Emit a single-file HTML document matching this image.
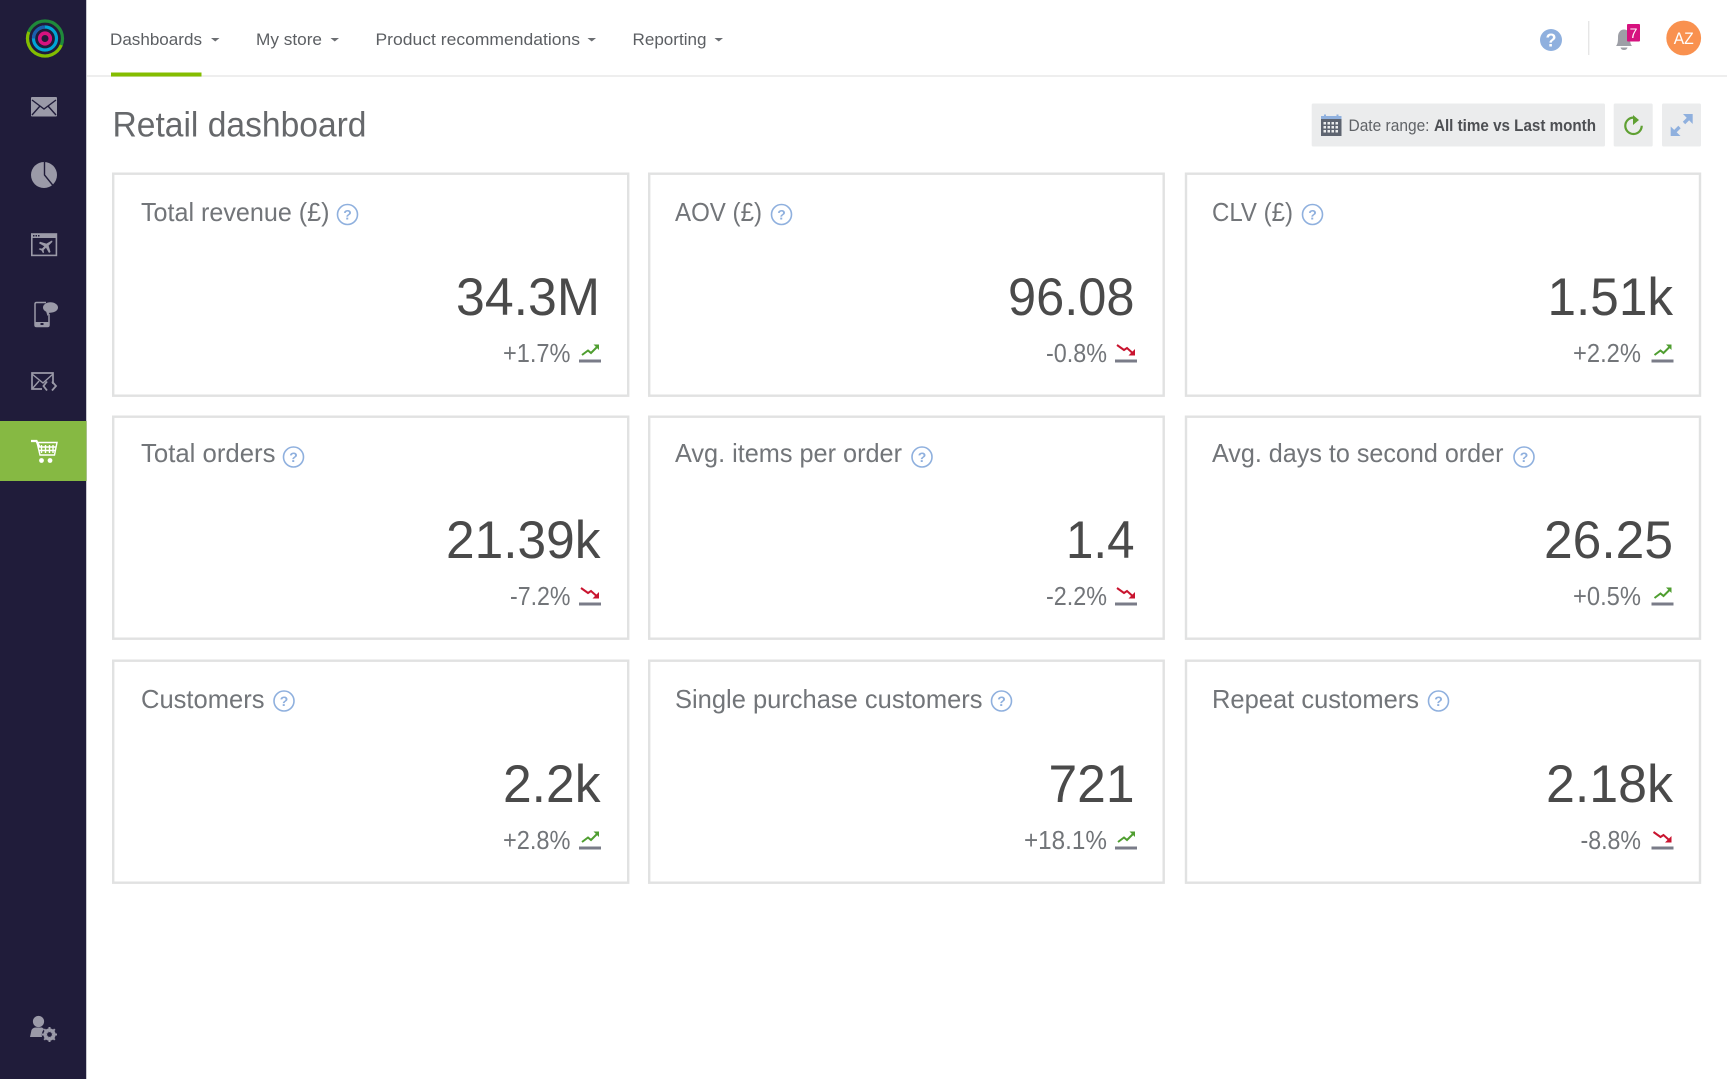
<!DOCTYPE html>
<html lang="en">
<head>
<meta charset="utf-8">
<title>Retail dashboard</title>
<style>
html,body{margin:0;padding:0;background:#fff;width:1727px;height:1079px;overflow:hidden}
svg{display:block;position:absolute;left:0;top:0}
text{font-family:"Liberation Sans",sans-serif}
.nav{font-size:16.5px;fill:#5c5f63}
.t{font-size:26px;fill:#727579}
.v{font-size:53px;fill:#4a4a4a}
.d{font-size:26px;fill:#727579}
.q{font-size:14px;font-weight:bold;fill:#8fb0de;text-anchor:middle}
.card{fill:#fff;stroke:#e1e2e2;stroke-width:2.4}
</style>
</head>
<body>
<svg width="1727" height="1079" viewBox="0 0 1727 1079" xmlns="http://www.w3.org/2000/svg">
<defs>
<g id="up">
<rect x="-22" y="-1.5" width="22" height="3" fill="#7a7c88"/>
<path d="M-19 -6 L-13 -10.5 L-10 -8 L-4 -14" fill="none" stroke="#4f9e30" stroke-width="2"/>
<path d="M-7.5 -16.5 L-2 -16.5 L-2 -11 Z" fill="#4f9e30"/>
</g>
<g id="down">
<rect x="-22" y="-1.5" width="22" height="3" fill="#7a7c88"/>
<path d="M-20 -16 L-13 -11 L-10 -13 L-5 -8.5" fill="none" stroke="#c9142f" stroke-width="2"/>
<path d="M-8.5 -5.5 L-2 -5.5 L-2 -12 Z" fill="#c9142f"/>
</g>
<g id="h">
<circle cx="0" cy="0" r="10" fill="#fff" stroke="#8fb0de" stroke-width="1.6"/>
<text class="q" x="0" y="5">?</text>
</g>
</defs>

<!-- sidebar -->
<rect x="0" y="0" width="86" height="1079" fill="#201c3a"/>
<rect x="86" y="0" width="1" height="1079" fill="#c9c9d0"/>
<rect x="0" y="421" width="86.5" height="60" fill="#86b943"/>

<!-- logo -->
<circle cx="45" cy="38.5" r="17.5" fill="none" stroke="#1f8a3a" stroke-width="3.2"/>
<path d="M27.5 38.5 A17.5 17.5 0 0 0 62.5 38.5" fill="none" stroke="#84bd00" stroke-width="3.2" transform="rotate(22 45 38.5)"/>
<circle cx="45" cy="38.5" r="11.5" fill="none" stroke="#00a5d6" stroke-width="3.2"/>
<path d="M33.5 38.5 A11.5 11.5 0 0 1 45 27" fill="none" stroke="#1b5fae" stroke-width="3.2"/>
<circle cx="45" cy="38.5" r="5.3" fill="none" stroke="#d6127f" stroke-width="3.6"/>

<!-- mail -->
<rect x="31" y="97" width="26" height="19.5" rx="1" fill="#9b9aa8"/>
<path d="M32 100 L44 109 L56 100 M32 115 L40 106 M56 115 L48 106" fill="none" stroke="#201c3a" stroke-width="1.4"/>
<!-- pie -->
<circle cx="44" cy="175" r="13" fill="#9b9aa8"/>
<path d="M44.5 162 L44.5 175 L53 185.5" fill="none" stroke="#201c3a" stroke-width="1.4"/>
<!-- browser plane -->
<rect x="31.8" y="234" width="24.6" height="21.4" fill="none" stroke="#9b9aa8" stroke-width="1.6"/>
<rect x="31" y="233.5" width="26" height="4.5" fill="#9b9aa8"/>
<path d="M33 235 h1.5 v1.5 h-1.5z M35.5 235 h1.5 v1.5 h-1.5z M38 235 h1.5 v1.5 h-1.5z" fill="#201c3a"/>
<path d="M51 241 C52 240 53 241 52 242.3 L48.6 245.6 L50.5 252 L49 253 L46 247.8 L43.6 250 L44 252.5 L43 253.2 L41.6 250.6 L38.8 249.2 L39.6 248.2 L42 248.6 L44.3 246.2 L39 243.2 L40 241.8 L46.4 243.6 Z" fill="#9b9aa8"/>
<!-- phone bubble -->
<path d="M46 302.5 H36.5 Q35 302.5 35 304 V325 Q35 326.5 36.5 326.5 H47.5 Q49 326.5 49 325 V314" fill="none" stroke="#9b9aa8" stroke-width="1.5"/>
<rect x="35" y="322" width="14" height="4.5" rx="1" fill="#9b9aa8"/>
<rect x="40.5" y="323" width="3" height="2" fill="#201c3a"/>
<ellipse cx="50.5" cy="307.5" rx="7.5" ry="5.2" fill="#9b9aa8"/>
<path d="M46 311 L47.5 316 L50 312 Z" fill="#9b9aa8"/>
<!-- mail code -->
<path d="M53 384 V373 H32 V389 H42" fill="none" stroke="#9b9aa8" stroke-width="1.7"/>
<path d="M32 374 L43 383 L53 374 M32 389 L39 381" fill="none" stroke="#9b9aa8" stroke-width="1.4"/>
<path d="M47 381.5 L43.5 386 L47 390.5 M52 381.5 L56 386 L52 390.5" fill="none" stroke="#9b9aa8" stroke-width="1.8"/>
<!-- cart -->
<path d="M31 441 H36.5 L39.5 447" fill="none" stroke="#fff" stroke-width="2.2"/>
<path d="M37 442.5 H57 L54.5 455 H40 Z M41.5 445 V453 M45.5 445 V453 M49.5 445 V453 M53 445 V453 M38.5 447 H55.5 M39 450.5 H55" fill="none" stroke="#fff" stroke-width="1.4"/>
<circle cx="41.5" cy="460.5" r="2.4" fill="#fff"/>
<circle cx="50" cy="460.5" r="2.4" fill="#fff"/>
<!-- user gear -->
<circle cx="38.5" cy="1021.5" r="5.6" fill="#9b9aa8"/>
<path d="M30 1037 L31.5 1030 Q33 1027.5 36 1027.5 H42 L44 1029 Q41 1033 42 1037 Z" fill="#9b9aa8"/>
<circle cx="49.5" cy="1034.5" r="4.6" fill="none" stroke="#9b9aa8" stroke-width="3"/>
<path d="M49.5 1027 V1042 M42 1034.5 H57 M44.2 1029.2 L54.8 1039.8 M54.8 1029.2 L44.2 1039.8" stroke="#9b9aa8" stroke-width="2"/>
<circle cx="49.5" cy="1034.5" r="2.4" fill="#201c3a"/>

<!-- header -->
<rect x="87" y="75" width="1640" height="2" fill="#eeeeee"/>
<rect x="111" y="72.5" width="90.5" height="4" fill="#84bd00"/>
<text class="nav" x="110" y="45" textLength="92" lengthAdjust="spacingAndGlyphs">Dashboards</text>
<path d="M211 38 H219.5 L215.25 41.5 Z" fill="#6b6e72"/>
<text class="nav" x="256" y="45" textLength="66" lengthAdjust="spacingAndGlyphs">My store</text>
<path d="M330.5 38 H339 L334.75 41.5 Z" fill="#6b6e72"/>
<text class="nav" x="375.5" y="45" textLength="204.5" lengthAdjust="spacingAndGlyphs">Product recommendations</text>
<path d="M587.5 38 H596 L591.75 41.5 Z" fill="#6b6e72"/>
<text class="nav" x="632.5" y="45" textLength="74" lengthAdjust="spacingAndGlyphs">Reporting</text>
<path d="M714.5 38 H723 L718.75 41.5 Z" fill="#6b6e72"/>

<!-- header right -->
<circle cx="1551" cy="40" r="11" fill="#8fb0de"/>
<text x="1551" y="46.5" font-size="18" font-weight="bold" fill="#fff" text-anchor="middle">?</text>
<rect x="1588" y="21" width="1.4" height="34" fill="#e6e6e6"/>
<path d="M1616 46 C1618 44 1618 40 1618 37 C1618 32.5 1620.5 29.5 1624 29.5 C1627.5 29.5 1630 32.5 1630 37 C1630 40 1630 44 1632 46 Z" fill="#9d9fa6"/>
<path d="M1620.5 47.5 H1627.5 Q1627 50 1624 50 Q1621 50 1620.5 47.5 Z" fill="#9d9fa6"/>
<rect x="1627" y="24" width="13" height="17.5" rx="1" fill="#d6127f"/>
<text x="1633.5" y="38" font-size="14" fill="#fff" text-anchor="middle">7</text>
<circle cx="1683.7" cy="38" r="17.4" fill="#f9914f"/>
<text x="1683.7" y="44" font-size="16.5" fill="#fff" text-anchor="middle" textLength="20" lengthAdjust="spacingAndGlyphs">AZ</text>

<!-- title -->
<text x="112.5" y="136.5" font-size="35" fill="#66686b" textLength="254" lengthAdjust="spacingAndGlyphs">Retail dashboard</text>

<!-- toolbar -->
<rect x="1311.7" y="103.5" width="293.3" height="43" rx="1.5" fill="#ebeced"/>
<rect x="1613.7" y="103.5" width="39" height="43" rx="1.5" fill="#ebeced"/>
<rect x="1662" y="103.5" width="39" height="43" rx="1.5" fill="#ebeced"/>
<!-- calendar -->
<rect x="1321" y="116.5" width="20.5" height="19.5" fill="#5e6470"/>
<rect x="1321" y="116" width="20.5" height="3" fill="#8fb0de"/>
<rect x="1324" y="114.5" width="2" height="3" fill="#8fb0de"/><rect x="1336.5" y="114.5" width="2" height="3" fill="#8fb0de"/>
<path d="M1323.5 122 h2.5v2.5h-2.5z M1327.5 122 h2.5v2.5h-2.5z M1331.5 122 h2.5v2.5h-2.5z M1335.5 122 h2.5v2.5h-2.5z M1323.5 126 h2.5v2.5h-2.5z M1327.5 126 h2.5v2.5h-2.5z M1331.5 126 h2.5v2.5h-2.5z M1335.5 126 h2.5v2.5h-2.5z M1323.5 130 h2.5v2.5h-2.5z M1327.5 130 h2.5v2.5h-2.5z M1331.5 130 h2.5v2.5h-2.5z M1335.5 130 h2.5v2.5h-2.5z" fill="#ebeced"/>
<text x="1348.5" y="131" font-size="16.5" fill="#606367" textLength="81" lengthAdjust="spacingAndGlyphs">Date range:</text>
<text x="1434" y="131" font-size="16.5" font-weight="bold" fill="#4d4f53" textLength="162" lengthAdjust="spacingAndGlyphs">All time vs Last month</text>
<!-- refresh -->
<path d="M1633.5 117.6 A8.2 8.2 0 1 0 1641.7 125.8" fill="none" stroke="#5fa033" stroke-width="2.2"/>
<path d="M1633 115 L1639 120 L1633 125 Z" fill="#5fa033"/>
<!-- expand -->
<path d="M1673 133.5 L1679.5 127 M1684 123 L1690.5 116.5" stroke="#8fb0de" stroke-width="3.4"/>
<path d="M1670.7 126.5 V136 H1680.5 Z" fill="#8fb0de"/>
<path d="M1692.7 124 V114 H1683 Z" fill="#8fb0de"/>

<!-- cards -->
<rect class="card" x="113.2" y="173.7" width="515" height="222"/>
<rect class="card" x="649.2" y="173.7" width="514.5" height="222"/>
<rect class="card" x="1186" y="173.7" width="514" height="222"/>
<rect class="card" x="113.2" y="416.7" width="515" height="222"/>
<rect class="card" x="649.2" y="416.7" width="514.5" height="222"/>
<rect class="card" x="1186" y="416.7" width="514" height="222"/>
<rect class="card" x="113.2" y="660.7" width="515" height="222"/>
<rect class="card" x="649.2" y="660.7" width="514.5" height="222"/>
<rect class="card" x="1186" y="660.7" width="514" height="222"/>

<!-- row 1 -->
<text class="t" x="141" y="221" textLength="188.5" lengthAdjust="spacingAndGlyphs">Total revenue (£)</text>
<use href="#h" x="347.5" y="214.5"/>
<text class="v" x="456" y="315" textLength="144" lengthAdjust="spacingAndGlyphs">34.3M</text>
<text class="d" x="503" y="362" textLength="67.5" lengthAdjust="spacingAndGlyphs">+1.7%</text>
<use href="#up" x="601" y="361"/>

<text class="t" x="675" y="221" textLength="87" lengthAdjust="spacingAndGlyphs">AOV (£)</text>
<use href="#h" x="781.5" y="214.5"/>
<text class="v" x="1008" y="315" textLength="126.5" lengthAdjust="spacingAndGlyphs">96.08</text>
<text class="d" x="1046" y="362" textLength="61" lengthAdjust="spacingAndGlyphs">-0.8%</text>
<use href="#down" x="1137" y="361"/>

<text class="t" x="1212" y="221" textLength="81" lengthAdjust="spacingAndGlyphs">CLV (£)</text>
<use href="#h" x="1312.5" y="214.5"/>
<text class="v" x="1547.5" y="315" textLength="125.5" lengthAdjust="spacingAndGlyphs">1.51k</text>
<text class="d" x="1573" y="362" textLength="68" lengthAdjust="spacingAndGlyphs">+2.2%</text>
<use href="#up" x="1673.5" y="361"/>

<!-- row 2 -->
<text class="t" x="141" y="462" textLength="134.5" lengthAdjust="spacingAndGlyphs">Total orders</text>
<use href="#h" x="293.5" y="457"/>
<text class="v" x="446" y="558" textLength="154.5" lengthAdjust="spacingAndGlyphs">21.39k</text>
<text class="d" x="510" y="605" textLength="60.5" lengthAdjust="spacingAndGlyphs">-7.2%</text>
<use href="#down" x="601" y="604"/>

<text class="t" x="675" y="462" textLength="227" lengthAdjust="spacingAndGlyphs">Avg. items per order</text>
<use href="#h" x="922" y="457"/>
<text class="v" x="1066" y="558" textLength="68.5" lengthAdjust="spacingAndGlyphs">1.4</text>
<text class="d" x="1046" y="605" textLength="61" lengthAdjust="spacingAndGlyphs">-2.2%</text>
<use href="#down" x="1137" y="604"/>

<text class="t" x="1212" y="462" textLength="291.5" lengthAdjust="spacingAndGlyphs">Avg. days to second order</text>
<use href="#h" x="1524" y="457"/>
<text class="v" x="1544" y="558" textLength="129" lengthAdjust="spacingAndGlyphs">26.25</text>
<text class="d" x="1573" y="605" textLength="68" lengthAdjust="spacingAndGlyphs">+0.5%</text>
<use href="#up" x="1673.5" y="604"/>

<!-- row 3 -->
<text class="t" x="141" y="708" textLength="123.5" lengthAdjust="spacingAndGlyphs">Customers</text>
<use href="#h" x="284" y="701"/>
<text class="v" x="503" y="802" textLength="97.5" lengthAdjust="spacingAndGlyphs">2.2k</text>
<text class="d" x="503" y="849" textLength="67.5" lengthAdjust="spacingAndGlyphs">+2.8%</text>
<use href="#up" x="601" y="848"/>

<text class="t" x="675" y="708" textLength="307.5" lengthAdjust="spacingAndGlyphs">Single purchase customers</text>
<use href="#h" x="1001.5" y="701"/>
<text class="v" x="1048.5" y="802" textLength="86" lengthAdjust="spacingAndGlyphs">721</text>
<text class="d" x="1024" y="849" textLength="83" lengthAdjust="spacingAndGlyphs">+18.1%</text>
<use href="#up" x="1137" y="848"/>

<text class="t" x="1212" y="708" textLength="207" lengthAdjust="spacingAndGlyphs">Repeat customers</text>
<use href="#h" x="1438.5" y="701"/>
<text class="v" x="1546" y="802" textLength="127" lengthAdjust="spacingAndGlyphs">2.18k</text>
<text class="d" x="1580.5" y="849" textLength="60.5" lengthAdjust="spacingAndGlyphs">-8.8%</text>
<use href="#down" x="1673.5" y="848"/>
</svg>
</body>
</html>
